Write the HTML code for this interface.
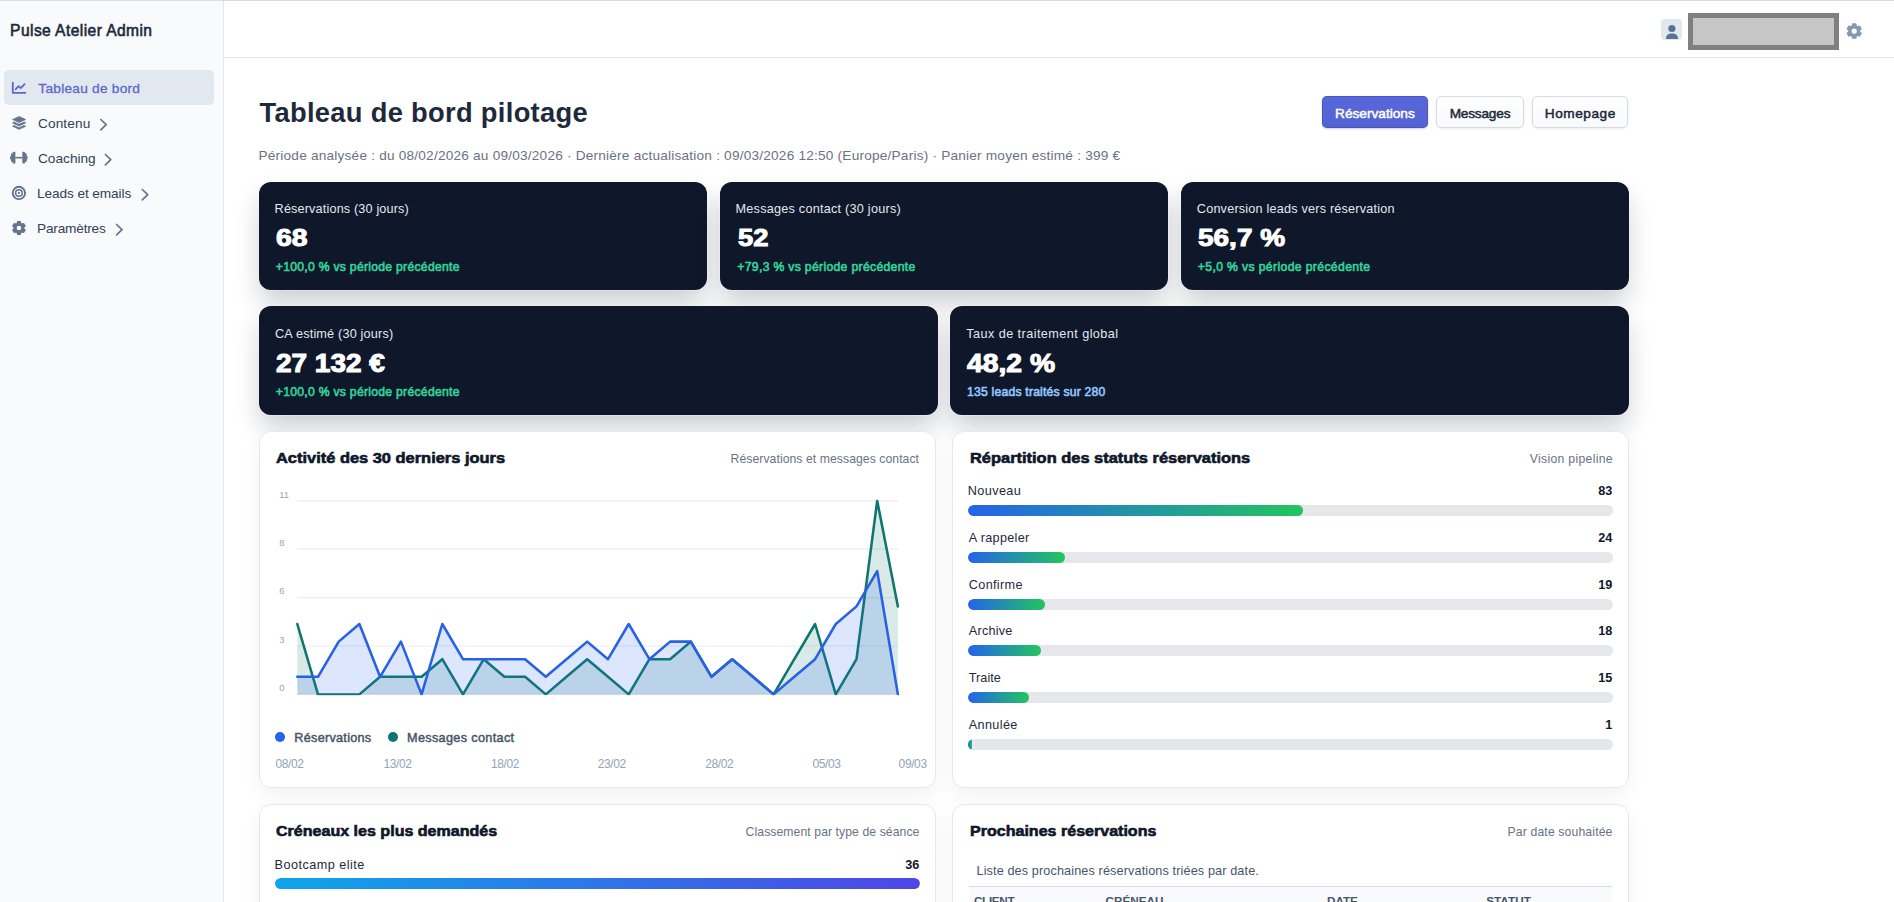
<!DOCTYPE html>
<html lang="fr">
<head>
<meta charset="utf-8">
<title>Pulse Atelier Admin - Tableau de bord</title>
<style>
*{box-sizing:border-box}
html,body{margin:0;padding:0}
body{background:#fff;font-family:"Liberation Sans",sans-serif;color:#1e293b}
#app{position:relative;width:1894px;height:902px;overflow:hidden;background:#fff}
.t{position:absolute;white-space:nowrap;line-height:1;font-family:"Liberation Sans",sans-serif}
.abs{position:absolute}
.chart{position:absolute;left:0;top:0;pointer-events:none}
.topline{left:0;top:0;width:1894px;height:1px;background:#dcdcde}
.sidebar{left:0;top:1px;width:224px;height:901px;background:#f8fafc;border-right:1px solid #e5e7eb}
.header{left:224px;top:1px;width:1670px;height:57px;background:#fff;border-bottom:1px solid #e5e7eb}
.navactive{left:4px;top:70px;width:210px;height:35px;border-radius:5px;background:#e2e8f0}
.redact{left:1688px;top:13px;width:151px;height:37px;background:#c6c6c6;border:5px solid #808080}
.btn{top:96px;height:32px;border-radius:5px}
.btn.primary{background:linear-gradient(#5868da,#5362d3);box-shadow:inset 0 0 0 1px rgba(55,66,175,.45),0 1px 2px rgba(30,41,59,.22)}
.btn.sec{background:linear-gradient(#ffffff,#f8fafc);border:1px solid #d5dae1;box-shadow:0 1px 2px rgba(30,41,59,.08)}
.kpi{height:108px;border-radius:12px;background:#0f172a;box-shadow:0 0 0 1px rgba(255,255,255,.3),0 14px 26px -2px rgba(15,23,42,.22)}
.panel{background:#fff;border:1px solid #e8e8ea;border-radius:12px;box-shadow:0 8px 20px rgba(15,23,42,.05)}
.track{position:absolute;height:11px;border-radius:6px;background:#e5e7eb;overflow:hidden}
.fill{height:100%;border-radius:6px}
.g1{background:linear-gradient(90deg,#2563eb,#22c55e)}
.g2{background:linear-gradient(90deg,#0ea5e9,#4f46e5)}
.dot{width:10px;height:10px;border-radius:50%}
.thead{left:969px;top:886px;width:643px;height:16px;background:#f8fafc;border-top:1px solid #d5dce6}
</style>
</head>
<body>
<div id="app">
<div class="abs topline"></div>

<aside class="abs sidebar"></aside>
<div class="abs navactive"></div>
<span class="t" style="left:10.09px;top:23px;font-size:15.6px;color:#1e293b;letter-spacing:0.423px;-webkit-text-stroke:0.58px #1e293b;">Pulse Atelier Admin</span>
<nav>
<span class="t" style="left:38.35px;top:82px;font-size:13.65px;color:#5a67c9;letter-spacing:0.268px;-webkit-text-stroke:0.3px #5a67c9;">Tableau de bord</span>
<span class="t" style="left:37.90px;top:117px;font-size:13.65px;color:#334155;letter-spacing:0.152px;">Contenu</span>
<span class="t" style="left:38.00px;top:152px;font-size:13.65px;color:#334155;letter-spacing:0.008px;">Coaching</span>
<span class="t" style="left:37.00px;top:187px;font-size:13.65px;color:#334155;letter-spacing:-0.094px;">Leads et emails</span>
<span class="t" style="left:37.00px;top:222px;font-size:13.65px;color:#334155;letter-spacing:-0.187px;">Paramètres</span>
</nav>

<header class="abs header"></header>
<div class="abs redact"></div>

<main>
<h1 style="margin:0"><span class="t" style="left:259.50px;top:99px;font-size:27.3px;font-weight:700;color:#1e293b;letter-spacing:0.311px;">Tableau de bord pilotage</span></h1>
<span class="t" style="left:258.50px;top:149px;font-size:13.65px;color:#6b7280;letter-spacing:0.205px;">Période analysée : du 08/02/2026 au 09/03/2026 · Dernière actualisation : 09/03/2026 12:50 (Europe/Paris) · Panier moyen estimé : 399 €</span>
<div class="abs btn primary" style="left:1322px;width:106px"></div>
<div class="abs btn sec" style="left:1436px;width:88px"></div>
<div class="abs btn sec" style="left:1532px;width:96px"></div>
<span class="t" style="left:1335.05px;top:107px;font-size:13.65px;color:#ffffff;letter-spacing:0.010px;-webkit-text-stroke:0.5px #ffffff;">Réservations</span>
<span class="t" style="left:1449.65px;top:107px;font-size:13.65px;color:#1e293b;letter-spacing:-0.193px;-webkit-text-stroke:0.5px #1e293b;">Messages</span>
<span class="t" style="left:1544.85px;top:107px;font-size:13.65px;color:#1e293b;letter-spacing:0.522px;-webkit-text-stroke:0.5px #1e293b;">Homepage</span>

<section>
<div class="abs kpi" style="left:259px;top:182px;width:448px"></div>
<div class="abs kpi" style="left:720px;top:182px;width:448px"></div>
<div class="abs kpi" style="left:1181px;top:182px;width:448px"></div>
<div class="abs kpi" style="left:259px;top:306.2px;width:679px;height:108.5px"></div>
<div class="abs kpi" style="left:950.3px;top:306.2px;width:678.7px;height:108.5px"></div>
<span class="t" style="left:274.60px;top:203px;font-size:12.67px;color:#e2e8f0;letter-spacing:0.154px;">Réservations (30 jours)</span><span class="t" style="left:275.88px;top:226px;font-size:24.5px;font-weight:700;color:#ffffff;-webkit-text-stroke:1.0px #ffffff;transform:scaleX(1.1583);transform-origin:0 0;">68</span><span class="t" style="left:275.80px;top:261px;font-size:12.19px;color:#34d399;letter-spacing:0.271px;-webkit-text-stroke:0.6px #34d399;">+100,0 % vs période précédente</span>
<span class="t" style="left:735.50px;top:203px;font-size:12.67px;color:#e2e8f0;letter-spacing:0.240px;">Messages contact (30 jours)</span><span class="t" style="left:737.56px;top:226px;font-size:24.5px;font-weight:700;color:#ffffff;-webkit-text-stroke:1.0px #ffffff;transform:scaleX(1.1149);transform-origin:0 0;">52</span><span class="t" style="left:737.30px;top:261px;font-size:12.19px;color:#34d399;letter-spacing:0.319px;-webkit-text-stroke:0.6px #34d399;">+79,3 % vs période précédente</span>
<span class="t" style="left:1196.80px;top:203px;font-size:12.67px;color:#e2e8f0;letter-spacing:0.200px;">Conversion leads vers réservation</span><span class="t" style="left:1198.07px;top:226px;font-size:24.5px;font-weight:700;color:#ffffff;-webkit-text-stroke:1.0px #ffffff;transform:scaleX(1.1421);transform-origin:0 0;">56,7 %</span><span class="t" style="left:1197.80px;top:261px;font-size:12.19px;color:#34d399;letter-spacing:0.367px;-webkit-text-stroke:0.6px #34d399;">+5,0 % vs période précédente</span>
<span class="t" style="left:275.00px;top:328px;font-size:12.67px;color:#e2e8f0;letter-spacing:0.183px;">CA estimé (30 jours)</span><span class="t" style="left:275.86px;top:351px;font-size:25px;font-weight:700;color:#ffffff;-webkit-text-stroke:1.0px #ffffff;transform:scaleX(1.1178);transform-origin:0 0;">27 132 €</span><span class="t" style="left:275.80px;top:386px;font-size:12.19px;color:#34d399;letter-spacing:0.271px;-webkit-text-stroke:0.6px #34d399;">+100,0 % vs période précédente</span>
<span class="t" style="left:966.30px;top:328px;font-size:12.67px;color:#e2e8f0;letter-spacing:0.433px;">Taux de traitement global</span><span class="t" style="left:967.37px;top:351px;font-size:25px;font-weight:700;color:#ffffff;-webkit-text-stroke:1.0px #ffffff;transform:scaleX(1.1323);transform-origin:0 0;">48,2 %</span><span class="t" style="left:967.10px;top:386px;font-size:12.19px;color:#93c5fd;letter-spacing:0.196px;-webkit-text-stroke:0.6px #93c5fd;">135 leads traités sur 280</span>
</section>

<section>
<div class="abs panel" style="left:259px;top:431px;width:677px;height:357px"></div>
<div class="abs panel" style="left:952px;top:431px;width:677px;height:357px"></div>
<div class="abs panel" style="left:259px;top:804px;width:677px;height:200px"></div>
<div class="abs panel" style="left:952px;top:804px;width:677px;height:200px"></div>
<span class="t" style="left:276.24px;top:451px;font-size:14.82px;font-weight:700;color:#0f172a;-webkit-text-stroke:0.61px #0f172a;transform:scaleX(1.1086);transform-origin:0 0;">Activité des 30 derniers jours</span><span class="t" style="left:730.60px;top:453px;font-size:12.19px;color:#687385;letter-spacing:0.068px;">Réservations et messages contact</span>
<svg class="chart" width="1894" height="902" viewBox="0 0 1894 902">
<defs><clipPath id="plot"><rect x="294.3" y="499.5" width="606.6" height="195.8"/></clipPath></defs>
<g stroke="#ececef" stroke-width="1.2"><line x1="297.3" x2="897.9" y1="500.8" y2="500.8"/><line x1="297.3" x2="897.9" y1="549.2" y2="549.2"/><line x1="297.3" x2="897.9" y1="597.6" y2="597.6"/><line x1="297.3" x2="897.9" y1="646.0" y2="646.0"/><line x1="297.3" x2="897.9" y1="694.4" y2="694.4"/></g>
<g font-family="Liberation Sans, sans-serif" font-size="9.4" fill="#9ca3af"><text x="279.3" y="497.6">11</text><text x="279.3" y="546.0">8</text><text x="279.3" y="594.4">6</text><text x="279.3" y="642.8">3</text><text x="279.3" y="691.2">0</text></g>
<g clip-path="url(#plot)" stroke-width="2.55" stroke-linejoin="round" stroke-linecap="round">
<path d="M297.3 624.0 L318.0 694.4 L338.7 694.4 L359.4 694.4 L380.1 676.8 L400.9 676.8 L421.6 676.8 L442.3 659.2 L463.0 694.4 L483.7 659.2 L504.4 676.8 L525.1 676.8 L545.8 694.4 L566.5 676.8 L587.2 659.2 L608.0 676.8 L628.7 694.4 L649.4 659.2 L670.1 659.2 L690.8 641.6 L711.5 676.8 L732.2 659.2 L752.9 676.8 L773.6 694.4 L794.3 659.2 L815.1 624.0 L835.8 694.4 L856.5 659.2 L877.2 500.8 L897.9 606.4 L897.9 694.4 L297.3 694.4 Z" fill="#0f766e" fill-opacity="0.16" stroke="none"/>
<path d="M297.3 624.0 L318.0 694.4 L338.7 694.4 L359.4 694.4 L380.1 676.8 L400.9 676.8 L421.6 676.8 L442.3 659.2 L463.0 694.4 L483.7 659.2 L504.4 676.8 L525.1 676.8 L545.8 694.4 L566.5 676.8 L587.2 659.2 L608.0 676.8 L628.7 694.4 L649.4 659.2 L670.1 659.2 L690.8 641.6 L711.5 676.8 L732.2 659.2 L752.9 676.8 L773.6 694.4 L794.3 659.2 L815.1 624.0 L835.8 694.4 L856.5 659.2 L877.2 500.8 L897.9 606.4" fill="none" stroke="#0f766e"/>
<path d="M297.3 676.8 L318.0 676.8 L338.7 641.6 L359.4 624.0 L380.1 676.8 L400.9 641.6 L421.6 694.4 L442.3 624.0 L463.0 659.2 L483.7 659.2 L504.4 659.2 L525.1 659.2 L545.8 676.8 L566.5 659.2 L587.2 641.6 L608.0 659.2 L628.7 624.0 L649.4 659.2 L670.1 641.6 L690.8 641.6 L711.5 676.8 L732.2 659.2 L752.9 676.8 L773.6 694.4 L794.3 676.8 L815.1 659.2 L835.8 624.0 L856.5 606.4 L877.2 571.2 L897.9 694.4 L897.9 694.4 L297.3 694.4 Z" fill="#2563eb" fill-opacity="0.16" stroke="none"/>
<path d="M297.3 676.8 L318.0 676.8 L338.7 641.6 L359.4 624.0 L380.1 676.8 L400.9 641.6 L421.6 694.4 L442.3 624.0 L463.0 659.2 L483.7 659.2 L504.4 659.2 L525.1 659.2 L545.8 676.8 L566.5 659.2 L587.2 641.6 L608.0 659.2 L628.7 624.0 L649.4 659.2 L670.1 641.6 L690.8 641.6 L711.5 676.8 L732.2 659.2 L752.9 676.8 L773.6 694.4 L794.3 676.8 L815.1 659.2 L835.8 624.0 L856.5 606.4 L877.2 571.2 L897.9 694.4" fill="none" stroke="#2861e6"/>
</g>
</svg>
<div class="abs dot" style="left:275px;top:732.2px;background:#2563eb"></div>
<div class="abs dot" style="left:388px;top:732.2px;background:#0f766e"></div>
<span class="t" style="left:294.34px;top:732px;font-size:12.67px;color:#475569;letter-spacing:0.272px;-webkit-text-stroke:0.47px #475569;">Réservations</span><span class="t" style="left:407.04px;top:732px;font-size:12.67px;color:#475569;letter-spacing:0.336px;-webkit-text-stroke:0.47px #475569;">Messages contact</span>
<span class="t" style="left:275.50px;top:758px;font-size:11.99px;color:#94a3b8;letter-spacing:-0.381px;">08/02</span><span class="t" style="left:383.40px;top:758px;font-size:11.99px;color:#94a3b8;letter-spacing:-0.381px;">13/02</span><span class="t" style="left:491.00px;top:758px;font-size:11.99px;color:#94a3b8;letter-spacing:-0.381px;">18/02</span><span class="t" style="left:597.70px;top:758px;font-size:11.99px;color:#94a3b8;letter-spacing:-0.381px;">23/02</span><span class="t" style="left:705.30px;top:758px;font-size:11.99px;color:#94a3b8;letter-spacing:-0.381px;">28/02</span><span class="t" style="left:812.40px;top:758px;font-size:11.99px;color:#94a3b8;letter-spacing:-0.381px;">05/03</span><span class="t" style="left:898.60px;top:758px;font-size:11.99px;color:#94a3b8;letter-spacing:-0.381px;">09/03</span>

<span class="t" style="left:969.94px;top:451px;font-size:14.82px;font-weight:700;color:#0f172a;-webkit-text-stroke:0.61px #0f172a;transform:scaleX(1.1087);transform-origin:0 0;">Répartition des statuts réservations</span><span class="t" style="left:1529.80px;top:453px;font-size:12.19px;color:#687385;letter-spacing:0.315px;">Vision pipeline</span>
<span class="t" style="left:967.80px;top:485px;font-size:12.67px;color:#1e293b;letter-spacing:0.396px;">Nouveau</span><span class="t" style="left:1598.26px;top:485px;font-size:12.67px;font-weight:700;color:#0f172a;">83</span><span class="t" style="left:968.80px;top:532px;font-size:12.67px;color:#1e293b;letter-spacing:0.314px;">A rappeler</span><span class="t" style="left:1598.26px;top:532px;font-size:12.67px;font-weight:700;color:#0f172a;">24</span><span class="t" style="left:968.80px;top:579px;font-size:12.67px;color:#1e293b;letter-spacing:0.328px;">Confirme</span><span class="t" style="left:1598.26px;top:579px;font-size:12.67px;font-weight:700;color:#0f172a;">19</span><span class="t" style="left:968.80px;top:625px;font-size:12.67px;color:#1e293b;letter-spacing:0.223px;">Archive</span><span class="t" style="left:1598.26px;top:625px;font-size:12.67px;font-weight:700;color:#0f172a;">18</span><span class="t" style="left:968.80px;top:672px;font-size:12.67px;color:#1e293b;letter-spacing:0.032px;">Traite</span><span class="t" style="left:1598.26px;top:672px;font-size:12.67px;font-weight:700;color:#0f172a;">15</span><span class="t" style="left:968.80px;top:719px;font-size:12.67px;color:#1e293b;letter-spacing:0.349px;">Annulée</span><span class="t" style="left:1605.30px;top:719px;font-size:12.67px;font-weight:700;color:#0f172a;">1</span>
<div class="track" style="left:968.3px;top:505.0px;width:644.5px"><div class="fill g1" style="width:334.3px"></div></div>
<div class="track" style="left:968.3px;top:552.0px;width:644.5px"><div class="fill g1" style="width:96.7px"></div></div>
<div class="track" style="left:968.3px;top:599.0px;width:644.5px"><div class="fill g1" style="width:76.5px"></div></div>
<div class="track" style="left:968.3px;top:645.0px;width:644.5px"><div class="fill g1" style="width:72.5px"></div></div>
<div class="track" style="left:968.3px;top:692.0px;width:644.5px"><div class="fill g1" style="width:60.4px"></div></div>
<div class="track" style="left:968.3px;top:739.0px;width:644.5px"><div class="fill g1" style="width:4.0px"></div></div>

<span class="t" style="left:275.93px;top:824px;font-size:14.82px;font-weight:700;color:#0f172a;-webkit-text-stroke:0.61px #0f172a;transform:scaleX(1.0834);transform-origin:0 0;">Créneaux les plus demandés</span><span class="t" style="left:745.60px;top:826px;font-size:12.19px;color:#687385;letter-spacing:0.085px;">Classement par type de séance</span>
<span class="t" style="left:274.50px;top:859px;font-size:12.67px;color:#1e293b;letter-spacing:0.463px;">Bootcamp elite</span><span class="t" style="left:905.26px;top:859px;font-size:12.67px;font-weight:700;color:#0f172a;">36</span>
<div class="track" style="left:274.8px;top:878px;width:645.2px"><div class="fill g2" style="width:100%"></div></div>

<span class="t" style="left:969.93px;top:824px;font-size:14.82px;font-weight:700;color:#0f172a;-webkit-text-stroke:0.61px #0f172a;transform:scaleX(1.0832);transform-origin:0 0;">Prochaines réservations</span><span class="t" style="left:1507.60px;top:826px;font-size:12.19px;color:#687385;letter-spacing:0.145px;">Par date souhaitée</span>
<span class="t" style="left:976.50px;top:865px;font-size:12.67px;color:#475569;letter-spacing:0.119px;">Liste des prochaines réservations triées par date.</span>
<div class="abs thead"></div>
<span class="t" style="left:973.90px;top:895px;font-size:11.7px;font-weight:700;color:#475569;letter-spacing:-0.292px;">CLIENT</span><span class="t" style="left:1105.40px;top:895px;font-size:11.7px;font-weight:700;color:#475569;letter-spacing:0.058px;">CRÉNEAU</span><span class="t" style="left:1327.00px;top:895px;font-size:11.7px;font-weight:700;color:#475569;letter-spacing:-0.051px;">DATE</span><span class="t" style="left:1486.20px;top:895px;font-size:11.7px;font-weight:700;color:#475569;letter-spacing:0.056px;">STATUT</span>
</section>
</main>
<svg class="chart" width="1894" height="902" viewBox="0 0 1894 902">
<!-- chart-line (active) -->
<g fill="none" stroke="#5a67c9" stroke-width="1.8" stroke-linecap="round" stroke-linejoin="round">
<path d="M12.8 82.6 V92.8 H25.4"/>
<path d="M15.6 89.4 L18.6 86.2 L20.8 88.2 L24.6 84.2"/>
</g>
<!-- layer-group -->
<g fill="#64748b" stroke="#64748b" stroke-width="0.8" stroke-linejoin="round">
<path d="M19.1 116.6 L25.6 119.5 L19.1 122.4 L12.6 119.5 Z"/>
<path d="M13.9 122 L12.6 122.9 L19.1 125.9 L25.6 122.9 L24.3 122 L19.1 124.3 Z"/>
<path d="M13.9 125.4 L12.6 126.3 L19.1 129.3 L25.6 126.3 L24.3 125.4 L19.1 127.7 Z"/>
</g>
<!-- dumbbell -->
<g fill="#64748b">
<rect x="10.1" y="156" width="1.4" height="3.4" rx="0.6"/>
<rect x="11" y="153.3" width="2" height="8.8" rx="0.8"/>
<rect x="12.7" y="151.8" width="2.7" height="11.8" rx="0.9"/>
<rect x="15.2" y="156.9" width="7.3" height="1.6"/>
<rect x="22.3" y="151.8" width="2.7" height="11.8" rx="0.9"/>
<rect x="24.7" y="153.3" width="2" height="8.8" rx="0.8"/>
<rect x="26.2" y="156" width="1.4" height="3.4" rx="0.6"/>
</g>
<!-- bullseye -->
<g fill="none" stroke="#64748b">
<circle cx="18.9" cy="192.95" r="6.15" stroke-width="1.9"/>
<circle cx="18.9" cy="192.95" r="3.3" stroke-width="1.55"/>
</g>
<circle cx="18.9" cy="192.95" r="1.1" fill="#64748b"/>
<path d="M17.25 223.57 L17.63 221.79 L20.27 221.79 L20.65 223.57 L21.94 224.31 L23.67 223.75 L24.99 226.04 L23.64 227.26 L23.64 228.74 L24.99 229.96 L23.67 232.25 L21.94 231.69 L20.65 232.43 L20.27 234.21 L17.63 234.21 L17.25 232.43 L15.96 231.69 L14.23 232.25 L12.91 229.96 L14.26 228.74 L14.26 227.26 L12.91 226.04 L14.23 223.75 L15.96 224.31Z M21.25 228.00 A2.3 2.3 0 1 0 16.65 228.00 A2.3 2.3 0 1 0 21.25 228.00Z" fill="#64748b" fill-rule="evenodd"/><path d="M17.25 223.57 L17.63 221.79 L20.27 221.79 L20.65 223.57 L21.94 224.31 L23.67 223.75 L24.99 226.04 L23.64 227.26 L23.64 228.74 L24.99 229.96 L23.67 232.25 L21.94 231.69 L20.65 232.43 L20.27 234.21 L17.63 234.21 L17.25 232.43 L15.96 231.69 L14.23 232.25 L12.91 229.96 L14.26 228.74 L14.26 227.26 L12.91 226.04 L14.23 223.75 L15.96 224.31Z" fill="none" stroke="#64748b" stroke-width="1.5" stroke-linejoin="round"/>
<path d="M100.8 119.5 L106.2 124.7 L100.8 129.9" fill="none" stroke="#64748b" stroke-width="1.7" stroke-linecap="round" stroke-linejoin="round"/><path d="M105.4 154.5 L110.8 159.7 L105.4 164.9" fill="none" stroke="#64748b" stroke-width="1.7" stroke-linecap="round" stroke-linejoin="round"/><path d="M142.3 189.5 L147.7 194.7 L142.3 199.9" fill="none" stroke="#64748b" stroke-width="1.7" stroke-linecap="round" stroke-linejoin="round"/><path d="M116.6 224.5 L122.0 229.7 L116.6 234.9" fill="none" stroke="#64748b" stroke-width="1.7" stroke-linecap="round" stroke-linejoin="round"/>
<!-- header -->
<rect x="1661" y="19" width="21" height="21" rx="4" fill="#e2e8f0"/>
<circle cx="1671.9" cy="28.5" r="3.6" fill="#5b7391"/>
<path d="M1665.9 38.9 C1665.9 35.3 1668.2 33.5 1671.9 33.5 C1675.6 33.5 1678.1 35.3 1678.1 38.9 Z" fill="#5b7391"/>
<path d="M1852.30 26.15 L1852.72 24.16 L1855.68 24.16 L1856.10 26.15 L1857.54 26.98 L1859.48 26.35 L1860.95 28.91 L1859.43 30.27 L1859.43 31.93 L1860.95 33.29 L1859.48 35.85 L1857.54 35.22 L1856.10 36.05 L1855.68 38.04 L1852.72 38.04 L1852.30 36.05 L1850.86 35.22 L1848.92 35.85 L1847.45 33.29 L1848.97 31.93 L1848.97 30.27 L1847.45 28.91 L1848.92 26.35 L1850.86 26.98Z M1856.80 31.10 A2.6 2.6 0 1 0 1851.60 31.10 A2.6 2.6 0 1 0 1856.80 31.10Z" fill="#8798b4" fill-rule="evenodd"/><path d="M1852.30 26.15 L1852.72 24.16 L1855.68 24.16 L1856.10 26.15 L1857.54 26.98 L1859.48 26.35 L1860.95 28.91 L1859.43 30.27 L1859.43 31.93 L1860.95 33.29 L1859.48 35.85 L1857.54 35.22 L1856.10 36.05 L1855.68 38.04 L1852.72 38.04 L1852.30 36.05 L1850.86 35.22 L1848.92 35.85 L1847.45 33.29 L1848.97 31.93 L1848.97 30.27 L1847.45 28.91 L1848.92 26.35 L1850.86 26.98Z" fill="none" stroke="#8798b4" stroke-width="1.6" stroke-linejoin="round"/>
</svg>
</div>
</body>
</html>
